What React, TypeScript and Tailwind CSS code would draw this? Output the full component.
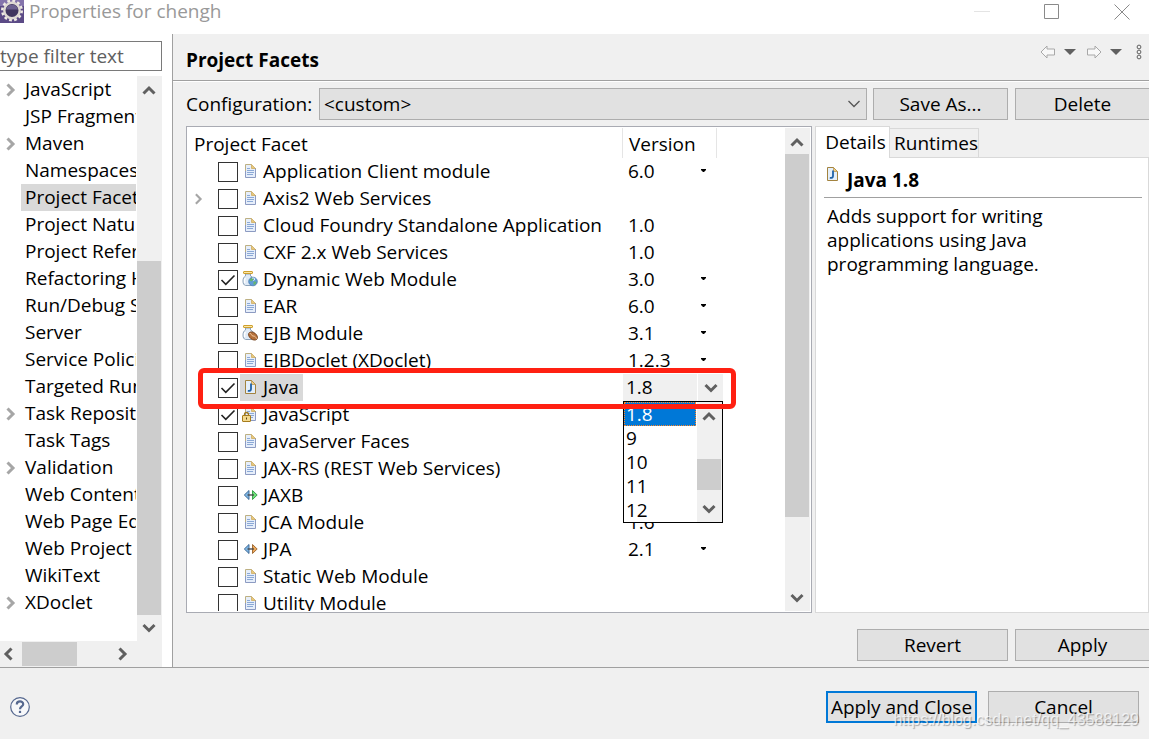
import { ReactNode, useState } from "react";

type IconName = "doc" | "web" | "ejb" | "java" | "locked" | "jaxb" | "jpa";

type Facet = {
  name: string;
  icon: IconName;
  version?: string;
  choice?: boolean;
  checked?: boolean;
  expandable?: boolean;
};

const FACETS: Facet[] = [
  { name: "Application Client module", icon: "doc", version: "6.0", choice: true },
  { name: "Axis2 Web Services", icon: "doc", expandable: true },
  { name: "Cloud Foundry Standalone Application", icon: "doc", version: "1.0" },
  { name: "CXF 2.x Web Services", icon: "doc", version: "1.0" },
  { name: "Dynamic Web Module", icon: "web", version: "3.0", choice: true, checked: true },
  { name: "EAR", icon: "doc", version: "6.0", choice: true },
  { name: "EJB Module", icon: "ejb", version: "3.1", choice: true },
  { name: "EJBDoclet (XDoclet)", icon: "doc", version: "1.2.3", choice: true },
  { name: "Java", icon: "java", version: "1.8", choice: true, checked: true },
  { name: "JavaScript", icon: "locked", checked: true },
  { name: "JavaServer Faces", icon: "doc" },
  { name: "JAX-RS (REST Web Services)", icon: "doc" },
  { name: "JAXB", icon: "jaxb" },
  { name: "JCA Module", icon: "doc", version: "1.6", choice: true },
  { name: "JPA", icon: "jpa", version: "2.1", choice: true },
  { name: "Static Web Module", icon: "doc" },
  { name: "Utility Module", icon: "doc" },
];

const TREE: { label: string; expandable?: boolean }[] = [
  { label: "JavaScript", expandable: true },
  { label: "JSP Fragment" },
  { label: "Maven", expandable: true },
  { label: "Namespaces" },
  { label: "Project Facets" },
  { label: "Project Natures" },
  { label: "Project References" },
  { label: "Refactoring History" },
  { label: "Run/Debug Settings" },
  { label: "Server" },
  { label: "Service Policies" },
  { label: "Targeted Runtimes" },
  { label: "Task Repository", expandable: true },
  { label: "Task Tags" },
  { label: "Validation", expandable: true },
  { label: "Web Content Settings" },
  { label: "Web Page Editor" },
  { label: "Web Project Settings" },
  { label: "WikiText" },
  { label: "XDoclet", expandable: true },
];

const JAVA_VERSIONS = ["1.8", "9", "10", "11", "12"];

const CHEVRONS = {
  up: "M1.5 9.5 7 4l5.5 5.5",
  down: "M1.5 4 7 9.5 12.5 4",
  left: "M9.5 1.5 4 7l5.5 5.5",
  right: "M4.5 1.5 10 7l-5.5 5.5",
};

function Chevron({ dir, className = "size-3.5 text-[#606060]", width = 3 }: { dir: keyof typeof CHEVRONS; className?: string; width?: number }) {
  return (
    <svg viewBox="0 0 14 14" className={className} fill="none" stroke="currentColor" strokeWidth={width} aria-hidden="true">
      <path d={CHEVRONS[dir]} />
    </svg>
  );
}

function FacetIcon({ name }: { name: IconName }) {
  return (
    <svg viewBox="0 0 16 16" className="size-4 flex-none" fill="none" aria-hidden="true">
      {(name === "doc" || name === "locked") && (
        <>
          <path d="M3.5 1.5h6l4 4v9h-10z" fill="#e6eefa" />
          <path d="M3.5 9V1.5h6" stroke="#bdb083" />
          <path d="M13.5 5v9.5h-10V8" stroke="#8c9bc2" />
          <path d="M9.5 1.5v4h4z" fill="#e8c87c" stroke="#c8a657" strokeWidth=".7" />
          <path d="M5 5.5h3M5 7.5h7M5 9.5h7M5 11.5h6" stroke="#8ba9d6" />
        </>
      )}
      {name === "locked" && (
        <>
          <path d="M2.5 10V8.5a2 2 0 0 1 4 0V10" stroke="#a07a22" strokeWidth="1.3" />
          <rect x=".5" y="9.5" width="8" height="6" rx=".5" fill="#f3d98d" stroke="#a67c1c" />
          <path d="M4.5 11.5v2" stroke="#5d4613" />
        </>
      )}
      {name === "java" && (
        <>
          <path d="M3.5 1.5h6l4 4v9h-10z" fill="#e4effb" stroke="#a3833f" />
          <path d="M9.5 1.5v4h4z" fill="#f0ce85" stroke="#b38f45" strokeWidth=".7" />
          <path d="M9 4.5V10c0 1.7-1 2-3.2 1.8" stroke="#1f62a8" strokeWidth="1.8" />
        </>
      )}
      {(name === "web" || name === "ejb") && (
        <>
          <path d="M3.5 3h5v2C11 6 12 8 12 10.5c0 2-1 3.500-2.500 4h-6C1.700 14 1 12.500 1 10c0-2.500.8-4 2.500-5z" fill="#dfeaf6" stroke="#8da2b8" />
          <path d="M3.500 7C2.500 8 2.300 10 2.800 12" stroke="#fff" strokeWidth="1.300" />
          <rect x="1.500" y=".5" width="9" height="2" rx=".5" fill="#fbe7a5" stroke="#cfa02e" />
        </>
      )}
      {name === "web" && (
        <>
          <circle cx="11" cy="10.500" r="4.300" fill="#5f9bd8" stroke="#4a7cb0" strokeWidth=".8" />
          <path d="M7.500 9.500c.8-2 2-3 3.500-2.800l.5 1.800-2 2zM11.500 10.500l3 .3-1.200 2.700-1.800.3z" fill="#66b56c" />
          <path d="M10 7.300c1-.5 2-.4 3 .5l-1.500 2" stroke="#e9f5ff" />
        </>
      )}
      {name === "ejb" && (
        <g transform="rotate(38 11 11)">
          <ellipse cx="11" cy="11" rx="5" ry="3.400" fill="#b5703a" stroke="#6e3a15" strokeWidth=".8" />
          <path d="M6.500 11c2-1.500 3 1.200 4.500 0s3-1 4.500 0" stroke="#f0c69a" strokeWidth=".9" />
        </g>
      )}
      {(name === "jaxb" || name === "jpa") && (
        <>
          <path d="M7 3.500v9L2.300 8z" fill="#7eb6e4" stroke="#33608f" strokeWidth=".9" />
          <path
            d="M10.500 3.500v9L15.200 8z"
            fill={name === "jaxb" ? "#6fe07a" : "#eda85a"}
            stroke={name === "jaxb" ? "#2e9a40" : "#99622a"}
            strokeWidth=".9"
          />
          <path d="M5.500 8h6.500" stroke="#444" strokeWidth="1.300" />
        </>
      )}
    </svg>
  );
}

function CheckBox({ id, checked, onChange }: { id: string; checked: boolean; onChange: () => void }) {
  return (
    <span className="grid size-5 flex-none">
      <input
        id={id}
        type="checkbox"
        checked={checked}
        onChange={onChange}
        className="size-5 appearance-none border border-[#333] bg-white [grid-area:1/1]"
      />
      {checked && (
        <svg viewBox="0 0 20 20" className="pointer-events-none size-5 [grid-area:1/1]" fill="none" stroke="#222" strokeWidth="1.6" aria-hidden="true">
          <path d="M3.500 10 7.800 14.300 16.500 5.500" />
        </svg>
      )}
    </span>
  );
}

function PushButton({
  children,
  className = "",
  border = "border border-[#adadad]",
}: {
  children: ReactNode;
  className?: string;
  border?: string;
}) {
  return (
    <button type="button" className={`flex h-8 flex-none items-center justify-center bg-[#e1e1e1] whitespace-nowrap ${border} ${className}`}>
      {children}
    </button>
  );
}

function TitleBar() {
  return (
    <header className="flex h-[34px] flex-none items-start bg-white text-[#999]">
      <svg viewBox="0 0 24 24" className="size-6 flex-none" aria-hidden="true">
        <rect width="24" height="23" fill="#5b4a86" />
        <path d="M0 0h24v6H0z" fill="#8474ac" />
        <circle cx="12" cy="10.500" r="9.700" fill="none" stroke="#efeae4" strokeWidth="2.600" strokeDasharray="2.800 2.280" />
        <circle cx="12" cy="10.500" r="7.700" fill="#40355f" stroke="#ddd8d3" strokeWidth="2.400" />
        <path d="M6 9.500a6.200 6.200 0 0 1 12 0z" fill="#6b6090" />
      </svg>
      <h1 className="ml-[5px] flex-1 leading-[23px]">Properties for chengh</h1>
      <div className="flex gap-[54px] pt-1 pr-[19px]">
        <button type="button" aria-label="Minimize">
          <svg viewBox="0 0 16 16" className="size-4" stroke="#e4e4e4"><path d="M0 7.500h16" /></svg>
        </button>
        <button type="button" aria-label="Maximize">
          <svg viewBox="0 0 16 16" className="size-4" fill="none" stroke="#8a8a8a"><path d="M.5.5h14v14H.5z" /></svg>
        </button>
        <button type="button" aria-label="Close">
          <svg viewBox="0 0 16 16" className="size-4" stroke="#8a8a8a"><path d="m.5.500 15 15m0-15-15 15" /></svg>
        </button>
      </div>
    </header>
  );
}

function Sidebar() {
  const [selected, setSelected] = useState("Project Facets");
  return (
    <aside className="flex w-[162px] flex-none flex-col pt-[7px]">
      <input
        type="text"
        aria-label="Filter"
        placeholder="type filter text"
        className="h-[30px] w-full flex-none border border-l-0 border-[#7a7a7a] bg-white placeholder:text-[#606060] focus:outline-none"
      />
      <div className="mt-[5px] flex min-h-0 flex-1">
        <ul className="min-w-0 flex-1 overflow-hidden pr-px">
          {TREE.map((node) => (
            <li key={node.label} className="flex h-[27px] items-center overflow-hidden whitespace-nowrap">
              <span className="w-[21px] flex-none pl-[3px]">
                {node.expandable && <Chevron dir="right" className="size-3.5 text-[#a6a6a6]" width={3} />}
              </span>
              <button
                type="button"
                onClick={() => setSelected(node.label)}
                className={`h-[27px] pl-1 leading-[27px] ${node.label === selected ? "bg-[#d9d9d9]" : ""}`}
              >
                {node.label}
              </button>
            </li>
          ))}
        </ul>
        <div className="flex w-[25px] flex-none flex-col items-center bg-[#f0f0f0] pt-2 pr-px pb-1.5">
          <Chevron dir="up" />
          <div className="min-h-0 flex-1" />
          <div className="h-[354px] w-6 flex-none bg-[#cdcdcd]" />
          <div className="h-1.5 flex-none" />
          <Chevron dir="down" />
        </div>
      </div>
      <div className="flex h-[26px] flex-none items-center bg-[#f0f0f0] pr-[33px] pl-0.5">
        <Chevron dir="left" />
        <div className="ml-1.5 h-6 w-[55px] bg-[#cdcdcd]" />
        <div className="flex-1" />
        <Chevron dir="right" />
      </div>
    </aside>
  );
}

function HistoryArrow({ flip }: { flip?: boolean }) {
  return (
    <svg viewBox="0 0 16 14" className={`h-3.5 w-4 ${flip ? "-scale-x-100" : ""}`} fill="#f8f8f8" stroke="#a8a8a8" aria-hidden="true">
      <path d="M1 7 7 1v3h7.500v6H7v3z" strokeLinejoin="round" />
    </svg>
  );
}

function VersionCombo() {
  const [value, setValue] = useState("1.8");
  return (
    <div className="relative w-[100px]">
      <div className="grid h-[27px] w-[100px]">
        <select
          aria-label="Java version"
          value={value}
          onChange={(e) => setValue(e.target.value)}
          className="h-[27px] appearance-none bg-[#f0f0f0] pb-0.5 pl-[3px] [grid-area:1/1]"
        >
          {JAVA_VERSIONS.map((v) => <option key={v}>{v}</option>)}
        </select>
        <span className="pointer-events-none flex w-[26px] items-center justify-center justify-self-end border-l border-white [grid-area:1/1]">
          <Chevron dir="down" />
        </span>
      </div>
      <div className="absolute top-[27px] left-0 z-10 flex h-[122px] w-[100px] border border-black bg-white">
        <ul role="listbox" aria-label="Java versions" className="flex-1 pr-px">
          {JAVA_VERSIONS.map((v) => (
            <li
              key={v}
              role="option"
              aria-selected={v === value}
              onClick={() => setValue(v)}
              className={`h-6 border border-dotted pl-px leading-[22px] ${v === value ? "border-[#ff8728] bg-[#0078d7] text-white" : "border-transparent"}`}
            >
              {v}
            </li>
          ))}
        </ul>
        <div className="flex w-[25px] flex-none flex-col items-center bg-[#f0f0f0] pt-2 pr-px pb-1.5">
          <Chevron dir="up" />
          <div className="mt-[35px] h-[31px] w-6 bg-[#cdcdcd]" />
          <div className="flex-1" />
          <Chevron dir="down" />
        </div>
      </div>
    </div>
  );
}

function FacetTable() {
  const [checked, setChecked] = useState(() => FACETS.filter((f) => f.checked).map((f) => f.name));
  const toggle = (name: string) =>
    setChecked((list) => (list.includes(name) ? list.filter((n) => n !== name) : [...list, name]));

  return (
    <div className="flex min-w-0 flex-1 border border-[#a9abb3] bg-white p-px">
      <div className="min-w-0 flex-1 overflow-hidden">
        <table className="w-full table-fixed border-separate border-spacing-0 text-left">
          <colgroup>
            <col className="w-[435px]" />
            <col className="w-[94px]" />
            <col />
          </colgroup>
          <thead>
            <tr className="h-[30px]">
              <th className="border-r border-[#e5e5e5] p-0 pt-0.5 pl-1.5 font-normal">Project Facet</th>
              <th className="border-r border-[#e5e5e5] p-0 pt-0.5 pl-1.5 font-normal">Version</th>
              <td />
            </tr>
          </thead>
          <tbody>
            {FACETS.map((facet, i) => {
              const isJava = facet.name === "Java";
              return (
                <tr key={facet.name} className="h-[27px]">
                  <td className="relative p-0 pl-1">
                    <div className="flex h-[27px] items-center">
                      <span className="w-[26px] flex-none">
                        {facet.expandable && <Chevron dir="right" className="size-3 text-[#a6a6a6]" width={2.5} />}
                      </span>
                      <CheckBox id={`facet-${i}`} checked={checked.includes(facet.name)} onChange={() => toggle(facet.name)} />
                      <label
                        htmlFor={`facet-${i}`}
                        className={`ml-0.5 flex h-[27px] items-center gap-[5px] pr-1 pb-0.5 pl-0.5 whitespace-nowrap ${isJava ? "bg-[#d9d9d9]" : ""}`}
                      >
                        <FacetIcon name={facet.icon} />
                        {facet.name}
                      </label>
                    </div>
                    {/* highlight frame around the Java row */}
                    {isJava && (
                      <span className="pointer-events-none absolute -top-1.5 left-2.5 z-20 h-[41px] w-[538px] rounded-md border-[5px] border-[#ff2012]" />
                    )}
                  </td>
                  <td className="p-0">
                    {isJava ? (
                      <VersionCombo />
                    ) : (
                      <div className="flex h-[27px] items-center pr-[11px] pb-0.5 pl-[5px]">
                        <span className="flex-1">{facet.version}</span>
                        {facet.choice && (
                          <svg viewBox="0 0 5 3" className="h-[3px] w-[5px]" aria-hidden="true"><path d="M0 0h5v1L3 3H2L0 1z" /></svg>
                        )}
                      </div>
                    )}
                  </td>
                  <td />
                </tr>
              );
            })}
          </tbody>
        </table>
      </div>
      <div className="flex w-[25px] flex-none flex-col items-center bg-[#f0f0f0] pt-2 pr-px pb-1.5">
        <Chevron dir="up" />
        <div className="mt-1 h-[363px] w-6 flex-none bg-[#cdcdcd]" />
        <div className="flex-1" />
        <Chevron dir="down" />
      </div>
    </div>
  );
}

function DetailsPane() {
  return (
    <section className="flex w-[334px] flex-none flex-col">
      <div role="tablist" className="flex h-[31px] flex-none items-end">
        <button type="button" role="tab" aria-selected="true" className="z-10 -mb-px h-8 w-[75px] border border-b-0 border-[#d9d9d9] bg-white pb-0.5 pl-1.5">
          Details
        </button>
        <button type="button" role="tab" aria-selected="false" className="-mb-px h-[30px] w-[89px] border border-l-0 border-[#d9d9d9] pl-1">
          Runtimes
        </button>
      </div>
      <div role="tabpanel" className="flex-1 border border-[#d9d9d9] bg-white pt-2 pr-1.5 pl-2">
        <div className="flex items-start gap-[7px] border-b border-[#a0a0a0] pb-[3px]">
          <FacetIcon name="java" />
          <h3 className="leading-7 font-bold">Java 1.8</h3>
        </div>
        <p className="w-60 pt-1.5 pl-[3px] leading-6">Adds support for writing applications using Java programming language.</p>
      </div>
    </section>
  );
}

function FacetsPage() {
  return (
    <main className="flex min-w-0 flex-1 flex-col border-l border-[#a0a0a0] bg-[#f0f0f0]">
      <div className="flex h-[47px] flex-none items-center justify-between border-b border-[#a0a0a0] pt-1.5 pr-[7px] pl-[13px]">
        <h2 className="font-bold">Project Facets</h2>
        <div className="flex h-6 items-center self-start">
          <button type="button" aria-label="Back"><HistoryArrow /></button>
          <svg viewBox="0 0 12 6" className="ml-2 h-1.5 w-3" fill="#606060" aria-hidden="true"><path d="M0 0h12L6 6z" /></svg>
          <button type="button" aria-label="Forward" className="pl-2.5"><HistoryArrow flip /></button>
          <svg viewBox="0 0 12 6" className="ml-2 h-1.5 w-3" fill="#606060" aria-hidden="true"><path d="M0 0h12L6 6z" /></svg>
          <button type="button" aria-label="View menu" className="pl-3.5">
            <svg viewBox="0 0 6 16" className="h-4 w-1.5" fill="none" stroke="#606060">
              <circle cx="3" cy="3" r="1.900" /><circle cx="3" cy="8" r="1.900" /><circle cx="3" cy="13" r="1.900" />
            </svg>
          </button>
        </div>
      </div>
      <div className="flex flex-none items-center border-t border-white pt-1.5 pl-[13px]">
        <label htmlFor="configuration" className="w-[133px] flex-none">Configuration:</label>
        <div className="grid min-w-0 flex-1">
          <select id="configuration" className="h-8 w-full appearance-none border border-[#adadad] bg-[#e1e1e1] pl-1 [grid-area:1/1]">
            <option>&lt;custom&gt;</option>
          </select>
          <Chevron dir="down" className="pointer-events-none mr-1.5 size-3.5 self-center justify-self-end text-[#555] [grid-area:1/1]" width={1.3} />
        </div>
        <PushButton className="ml-1.5 w-[135px]">Save As...</PushButton>
        <PushButton className="ml-[7px] w-[134px]" border="border border-r-0 border-[#adadad]">Delete</PushButton>
      </div>
      <div className="mt-1.5 flex min-h-0 flex-1 gap-[3px] pl-[13px]">
        <FacetTable />
        <DetailsPane />
      </div>
      <div className="flex flex-none justify-end gap-[7px] pt-4 pb-1.5">
        <PushButton className="w-[151px]">Revert</PushButton>
        <PushButton className="w-[134px]" border="border border-r-0 border-[#adadad]">Apply</PushButton>
      </div>
    </main>
  );
}

export default function App() {
  return (
    <div className="flex h-screen flex-col overflow-hidden bg-[#f0f0f0] font-['Open_Sans','Noto_Sans',sans-serif] text-[19px] leading-6 text-black">
      <TitleBar />
      <div className="flex min-h-0 flex-1 bg-white">
        <Sidebar />
        <div className="w-2.5 flex-none" />
        <FacetsPage />
      </div>
      <footer className="relative flex h-[72px] flex-none items-center border-t border-[#a0a0a0] px-2.5 pt-1.5">
        <button type="button" aria-label="Help">
          <svg viewBox="0 0 20 20" className="size-5" fill="none" stroke="#56688f" aria-hidden="true">
            <circle cx="10" cy="10" r="9.300" fill="#f7f8fa" strokeWidth="1.200" />
            <path d="M6.800 7.500c0-4 6.400-4 6.400-.3 0 2.300-3.200 2.300-3.200 5" strokeWidth="2.200" />
            <path d="M10 13.800V16" strokeWidth="2.200" />
          </svg>
        </button>
        <div className="flex-1" />
        <PushButton className="w-[151px]" border="border-2 border-[#0078d7]">Apply and Close</PushButton>
        <PushButton className="ml-[11px] w-[151px]">Cancel</PushButton>
        <span className="pointer-events-none absolute right-2.5 bottom-[7px] font-['Liberation_Sans',sans-serif] text-base text-white/70 [text-shadow:1px_1px_1px_#00000050]">
          https://blog.csdn.net/qq_43588129
        </span>
      </footer>
    </div>
  );
}
